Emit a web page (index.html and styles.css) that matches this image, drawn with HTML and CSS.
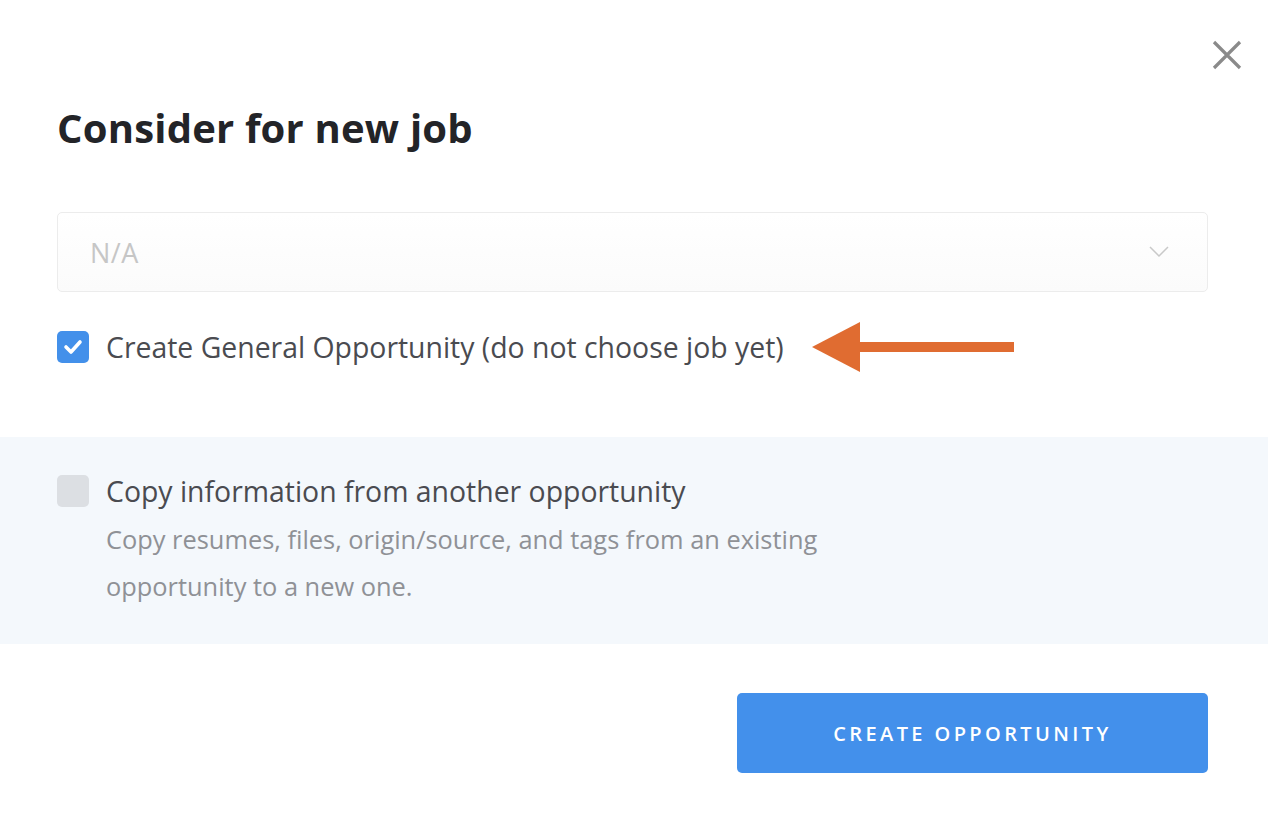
FILE: index.html
```html
<!DOCTYPE html>
<html>
<head>
<meta charset="utf-8">
<link rel="stylesheet" href="styles.css">
</head>
<body>
<div class="modal">
  <button class="close" aria-label="Close">
    <svg width="30" height="30" viewBox="0 0 30 30"><path d="M2 2 L28 28 M28 2 L2 28" stroke="#8a8a8a" stroke-width="3.2" fill="none"/></svg>
  </button>
  <div class="top">
    <h1 class="title">Consider for new job</h1>
    <div class="select">
      <span class="select-value">N/A</span>
      <svg class="chevron" width="20" height="12" viewBox="0 0 20 12"><path d="M1 1 L10 10 L19 1" stroke="#c9c9c9" stroke-width="1.5" fill="none"/></svg>
    </div>
    <div class="check-row">
      <span class="box checked">
        <svg width="20" height="16" viewBox="0 0 20 16"><path d="M3 8 L8 13 L17 3" stroke="#fff" stroke-width="3.6" fill="none" stroke-linecap="round" stroke-linejoin="round"/></svg>
      </span>
      <span class="label">Create General Opportunity (do not choose job yet)</span>
      <svg class="arrow" width="204" height="52" viewBox="0 0 204 52"><polygon points="0,26 48,1 48,51" fill="#e06c31"/><rect x="46" y="21" width="156" height="10" fill="#e06c31"/></svg>
    </div>
  </div>
  <div class="copy-section">
    <div class="copy-row">
      <span class="box unchecked"></span>
      <div class="copy-text">
        <div class="label">Copy information from another opportunity</div>
        <div class="desc">Copy resumes, files, origin/source, and tags from an existing<br>opportunity to a new one.</div>
      </div>
    </div>
  </div>
  <div class="footer">
    <button class="primary">CREATE OPPORTUNITY</button>
  </div>
</div>
</body>
</html>
```
FILE: styles.css
```css
* { box-sizing: border-box; }
html, body { margin: 0; padding: 0; background: #fff; }
body {
  width: 1268px;
  height: 814px;
  overflow: hidden;
  font-family: "Open Sans", "Noto Sans", sans-serif;
}
.modal { position: relative; width: 1268px; height: 814px; }
.close {
  position: absolute;
  top: 40px;
  left: 1212px;
  width: 30px;
  height: 30px;
  padding: 0;
  border: 0;
  background: none;
}
.top { padding: 98px 60px 0 57px; }
.title {
  margin: 0;
  font-size: 40px;
  line-height: 60px;
  font-weight: 700;
  color: #232428;
  letter-spacing: 0.2px;
}
.select {
  margin-top: 54px;
  height: 80px;
  border: 1.5px solid #ececec;
  border-radius: 5px;
  background: linear-gradient(#fff, #fbfbfb);
  display: flex;
  align-items: center;
  justify-content: space-between;
  padding: 0 38px 0 32px;
}
.select-value { font-size: 27px; color: #c6c6c6; letter-spacing: 0.5px; }
.check-row {
  margin-top: 39px;
  display: flex;
  align-items: center;
  height: 32px;
}
.box {
  width: 32px;
  height: 32px;
  border-radius: 5px;
  flex: none;
  display: flex;
  align-items: center;
  justify-content: center;
}
.box.checked { background: #4390ea; }
.box.unchecked { background: #dcdfe3; }
.label {
  font-size: 28.4px;
  color: #4a4b50;
  margin-left: 17px;
  line-height: 32px;
  white-space: nowrap;
}
.arrow { margin-left: 28px; flex: none; }
.copy-section {
  margin-top: 74px;
  height: 207px;
  background: #f4f8fc;
  padding: 38px 60px 0 57px;
}
.copy-row { display: flex; align-items: flex-start; }
.copy-text .label { margin-left: 17px; }
.desc {
  margin-left: 17px;
  margin-top: 9px;
  font-size: 25.4px;
  line-height: 47px;
  color: #8f9196;
}
.footer {
  display: flex;
  justify-content: flex-end;
  padding: 49px 60px 0 0;
}
.primary {
  width: 471px;
  height: 80px;
  border: 0;
  border-radius: 5px;
  background: #4390eb;
  color: #fff;
  font-family: "Open Sans", "Noto Sans", sans-serif;
  font-size: 20px;
  font-weight: 600;
  letter-spacing: 3.4px;
}
```
